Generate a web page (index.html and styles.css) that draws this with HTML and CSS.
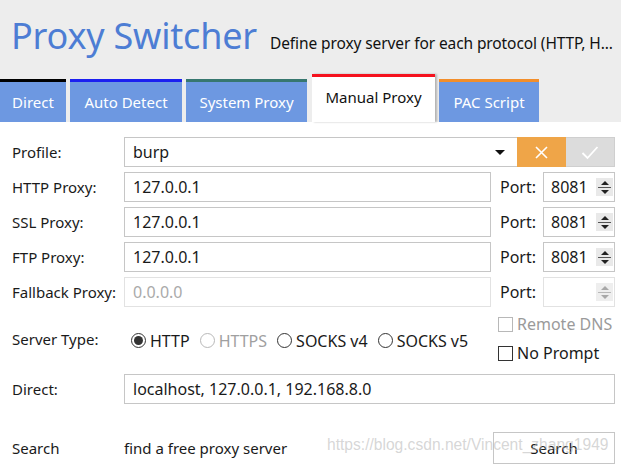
FILE: index.html
```html
<!DOCTYPE html>
<html>
<head>
<meta charset="utf-8">
<link rel="stylesheet" href="styles.css">
</head>
<body>
<div class="header">
  <div class="titlebar">
    <h1 class="title">Proxy Switcher</h1>
    <span class="subtitle">Define proxy server for each protocol (HTTP, H...</span>
  </div>
  <div class="tabs">
    <div class="tab t-direct">Direct</div>
    <div class="tab t-auto">Auto Detect</div>
    <div class="tab t-system">System Proxy</div>
    <div class="tab t-manual">Manual Proxy</div>
    <div class="tab t-pac">PAC Script</div>
  </div>
</div>
<div class="content">
  <div class="row">
    <span class="lbl">Profile:</span>
    <div class="profile">
      <div class="select"><span>burp</span><i class="caret"></i></div>
      <div class="btn-x"><svg width="13" height="13" viewBox="0 0 13 13"><path d="M1 1 L12 12 M12 1 L1 12" stroke="#fff" stroke-width="1.6"/></svg></div>
      <div class="btn-ok"><svg width="18" height="15" viewBox="0 0 18 15"><path d="M1.5 8 L6.5 13 L16.5 2" fill="none" stroke="#fff" stroke-width="1.8"/></svg></div>
    </div>
  </div>
  <div class="row">
    <span class="lbl">HTTP Proxy:</span>
    <div class="input">127.0.0.1</div>
    <span class="plbl">Port:</span>
    <div class="port"><span>8081</span><span class="spin"><i class="up"></i><i class="mid"></i><i class="dn"></i></span></div>
  </div>
  <div class="row">
    <span class="lbl">SSL Proxy:</span>
    <div class="input">127.0.0.1</div>
    <span class="plbl">Port:</span>
    <div class="port"><span>8081</span><span class="spin"><i class="up"></i><i class="mid"></i><i class="dn"></i></span></div>
  </div>
  <div class="row">
    <span class="lbl">FTP Proxy:</span>
    <div class="input">127.0.0.1</div>
    <span class="plbl">Port:</span>
    <div class="port"><span>8081</span><span class="spin"><i class="up"></i><i class="mid"></i><i class="dn"></i></span></div>
  </div>
  <div class="row">
    <span class="lbl">Fallback Proxy:</span>
    <div class="input disabled"><span class="ph">0.0.0.0</span></div>
    <span class="plbl">Port:</span>
    <div class="port disabled"><span></span><span class="spin"><i class="up"></i><i class="mid"></i><i class="dn"></i></span></div>
  </div>
  <div class="row server">
    <span class="lbl">Server Type:</span>
    <div class="radios">
      <label class="radio"><i class="dot on"></i>HTTP</label>
      <label class="radio off"><i class="dot"></i>HTTPS</label>
      <label class="radio"><i class="dot"></i>SOCKS v4</label>
      <label class="radio"><i class="dot"></i>SOCKS v5</label>
    </div>
    <div class="checks">
      <label class="check off"><i class="box"></i>Remote DNS</label>
      <label class="check"><i class="box"></i>No Prompt</label>
    </div>
  </div>
  <div class="row direct">
    <span class="lbl">Direct:</span>
    <div class="input wide">localhost, 127.0.0.1, 192.168.8.0</div>
  </div>
  <div class="row search">
    <span class="lbl">Search</span>
    <span class="find">find a free proxy server</span>
    <div class="sbtn">Search</div>
  </div>
  <div class="watermark">https://blog.csdn.net/Vincent_zhang1949</div>
</div>
</body>
</html>
```
FILE: styles.css
```css
* { box-sizing: border-box; }
body {
  margin: 0;
  background: #fff;
  font-family: "Noto Sans", "Open Sans", sans-serif;
  color: #1a1a1a;
  width: 621px;
  height: 464px;
  overflow: hidden;
}
.header {
  background: #ededed;
  height: 122px;
  display: flex;
  flex-direction: column;
  justify-content: space-between;
}
.titlebar {
  display: flex;
  align-items: baseline;
  padding: 14px 0 0 11px;
  white-space: nowrap;
}
.title {
  margin: 0;
  font-weight: normal;
  font-size: 36px;
  line-height: 44px;
  color: #4d7dd4;
  letter-spacing: -0.2px;
}
.subtitle {
  font-size: 15.5px;
  color: #111;
  margin-left: 13px;
  letter-spacing: -0.1px;
}
.tabs {
  display: flex;
  align-items: flex-end;
  gap: 4px;
}
.tab {
  height: 43px;
  border-top: 3px solid #000;
  background: #6d98e1;
  color: #fff;
  font-size: 15px;
  display: flex;
  align-items: center;
  justify-content: center;
}
.t-direct { width: 66px; border-top-color: #000; }
.t-auto { width: 112px; border-top-color: #1b1ff0; }
.t-system { width: 121px; border-top-color: #37776f; }
.t-manual {
  width: 123px;
  height: 48px;
  margin-left: 1px;
  background: #fff;
  color: #111;
  border-top-color: #f5121e;
  padding-bottom: 5px;
  box-shadow: 2px 0 2px rgba(0,0,0,0.25);
  position: relative;
  z-index: 1;
}
.t-pac { width: 100px; border-top-color: #f28e2b; }

.content {
  position: relative;
  padding: 15px 6px 0 12px;
  display: flex;
  flex-direction: column;
  gap: 5px;
  font-size: 15px;
}
.row {
  display: grid;
  grid-template-columns: 112px 367px 52px 72px;
  height: 30px;
  align-items: center;
}
.lbl { white-space: nowrap; }
.input {
  height: 30px;
  border: 1px solid #c6c6c6;
  padding-left: 8px;
  display: flex;
  align-items: center;
  font-size: 16px;
}
.input.disabled { border-color: #e2e2e2; }
.ph { color: #aaa; }
.plbl { padding-left: 9px; font-size: 16px; }
.port {
  height: 30px;
  border: 1px solid #c6c6c6;
  display: flex;
  align-items: center;
  justify-content: space-between;
  padding-left: 7px;
  padding-right: 1px;
  font-size: 16px;
}
.port.disabled { border-color: #e2e2e2; }
.spin {
  width: 17px;
  height: 18px;
  background: #e9e9e9;
  display: flex;
  flex-direction: column;
  align-items: center;
  justify-content: center;
  gap: 2px;
}
.spin .up { border-left: 4px solid transparent; border-right: 4px solid transparent; border-bottom: 4px solid #222; }
.spin .dn { border-left: 4px solid transparent; border-right: 4px solid transparent; border-top: 4px solid #222; }
.spin .mid { width: 13px; height: 1px; background: #555; }
.port.disabled .spin { background: #eee; }
.port.disabled .spin .up { border-bottom-color: #a8a8a8; }
.port.disabled .spin .dn { border-top-color: #a8a8a8; }
.port.disabled .spin .mid { background: #b8b8b8; }

.profile { grid-column: 2 / 5; display: flex; height: 30px; }
.select {
  flex: 1;
  border: 1px solid #c6c6c6;
  border-right: none;
  display: flex;
  align-items: center;
  justify-content: space-between;
  padding: 0 12px 0 8px;
  font-size: 16px;
}
.caret { border-left: 5px solid transparent; border-right: 5px solid transparent; border-top: 5px solid #111; }
.btn-x {
  width: 49px;
  background: #efa548;
  display: flex;
  align-items: center;
  justify-content: center;
}
.btn-ok {
  width: 49px;
  background: #dcdcdc;
  border: 1px solid #cfcfcf;
  border-left: none;
  display: flex;
  align-items: center;
  justify-content: center;
}

.row.server { height: 53px; }
.radios { display: flex; align-items: center; padding: 4px 0 0 7px; gap: 10px; font-size: 16px; }
.radio { display: flex; align-items: center; gap: 4px; }
.radio .dot {
  width: 15px; height: 15px; border-radius: 50%;
  border: 1px solid #333;
  display: flex; align-items: center; justify-content: center;
}
.radio .dot.on::after { content: ""; width: 9px; height: 9px; border-radius: 50%; background: #333; }
.radio.off { color: #a0a0a0; }
.radio.off .dot { border-color: #b8b8b8; }
.checks { grid-column: 3 / 5; display: flex; flex-direction: column; gap: 9px; padding-left: 7px; font-size: 16px; }
.check { display: flex; align-items: center; gap: 4px; line-height: 20px; }
.check .box { width: 15px; height: 15px; border: 1px solid #333; }
.check.off { color: #9a9a9a; }
.check.off .box { border-color: #b8b8b8; }

.row.direct { margin-top: 4px; }
.input.wide { grid-column: 2 / 5; }
.row.search { margin-top: 23px; height: 32px; }
.find { grid-column: 2 / 3; }
.sbtn {
  grid-column: 3 / 5;
  margin-left: 2px;
  height: 32px;
  border: 1px solid #c6c6c6;
  display: flex;
  align-items: center;
  justify-content: center;
  font-size: 15px;
}
.watermark {
  position: absolute;
  left: 327px;
  top: 314px;
  font-family: "Liberation Sans", sans-serif;
  font-size: 15.6px;
  color: rgba(180,180,180,0.55);
  pointer-events: none;
  white-space: nowrap;
}
```
